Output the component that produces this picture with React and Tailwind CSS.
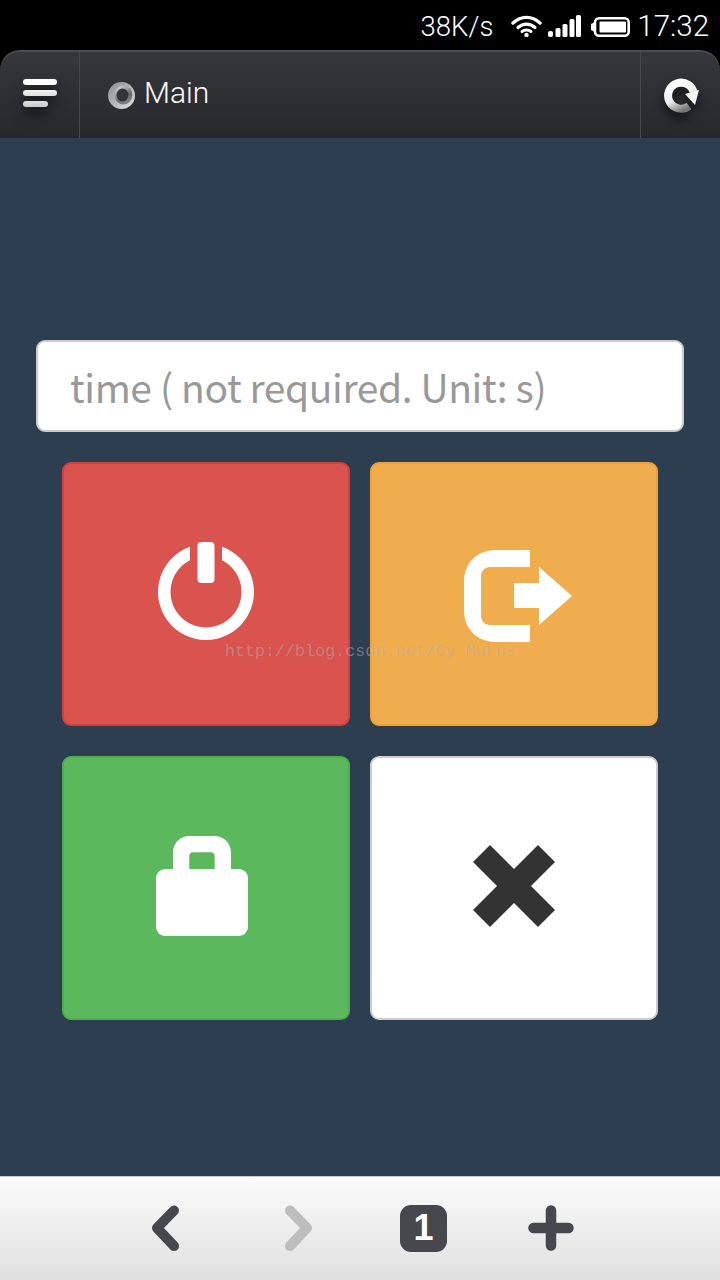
import React from "react";

const StatusBar = () => (
  <div className="h-[50px] bg-black flex items-center justify-end pr-[11px] pt-[3px] text-white font-['Roboto',sans-serif] font-light text-[27.500px]">
    <span className="mr-[18px]">38K/s</span>
    <svg width="70" height="22" viewBox="0 0 70 22" fill="none" className="mr-[10px] mb-[2px]">
      <path d="M2 8 C10 0.500 21 0.500 29 8" stroke="#fff" strokeWidth="3.400" strokeLinecap="round" />
      <path d="M7 12.500 C12 8 19 8 24 12.500" stroke="#fff" strokeWidth="3.200" strokeLinecap="round" />
      <path d="M11 16.500 C13.500 14.500 17.500 14.500 20 16.500" stroke="#fff" strokeWidth="3" strokeLinecap="round" />
      <circle cx="15.500" cy="20" r="2.200" fill="#fff" />
      <rect x="37" y="16" width="5" height="6" rx="2" fill="#fff" />
      <rect x="44.500" y="13" width="5" height="9" rx="1.500" fill="#fff" />
      <rect x="51.500" y="9" width="5" height="13" rx="1.500" fill="#fff" />
      <rect x="58.500" y="4" width="5" height="18" rx="1.500" fill="#fff" />
      <rect x="65" y="0" width="5" height="22" rx="1.500" fill="#fff" />
    </svg>
    <svg width="39" height="20" viewBox="0 0 39 20" fill="none" className="mr-[7px]">
      <path d="M0 7 L4 5 V15 L0 13 Z" fill="#fff" />
      <rect x="4" y="1.300" width="33.700" height="17.400" rx="4" stroke="#fff" strokeWidth="2.600" />
      <rect x="8.500" y="4.500" width="26.500" height="11" rx="1" fill="#fff" />
    </svg>
    <span className="text-[29.500px]">17:32</span>
  </div>
);

const Toolbar = () => (
  <div className="h-[88px] flex rounded-t-[20px] border-t-2 border-[#4b4c50] bg-gradient-to-b from-[#36373b] to-[#27282b]">
    <div className="w-[80px] border-r border-[#47484c] flex items-center justify-center">
      <div className="flex flex-col gap-[5px] w-[34px] mb-[4px] drop-shadow-[0_8px_6px_rgba(0,0,0,0.6)]">
        <div className="h-[6px] w-[34px] rounded-full bg-white" />
        <div className="h-[6px] w-[34px] rounded-full bg-gradient-to-b from-[#f2f2f2] to-[#dddddd]" />
        <div className="h-[6px] w-[25px] rounded-full bg-gradient-to-b from-[#e0e0e0] to-[#c8c8c8]" />
      </div>
    </div>
    <div className="flex-1 flex items-center pl-[28px] pb-[5px]">
      <svg width="27" height="27" viewBox="0 0 27 27" className="mt-[5px]">
        <defs>
          <linearGradient id="globe" x1="0" y1="0" x2="1" y2="1">
            <stop offset="0" stopColor="#8c8c8c" />
            <stop offset="0.5" stopColor="#b4b4b4" />
            <stop offset="1" stopColor="#e6e6e6" />
          </linearGradient>
          <linearGradient id="globeInner" x1="0.2" y1="0" x2="0.8" y2="1">
            <stop offset="0" stopColor="#d8d8d8" />
            <stop offset="0.6" stopColor="#6a6a6a" />
            <stop offset="1" stopColor="#8a8a8a" />
          </linearGradient>
        </defs>
        <circle cx="13.500" cy="13.500" r="13.500" fill="url(#globe)" />
        <ellipse cx="15.500" cy="13" rx="9" ry="9.500" fill="url(#globeInner)" />
        <ellipse cx="14.500" cy="13" rx="6" ry="6.500" fill="#343537" />
      </svg>
      <span className="ml-[9px] text-[30px] font-light leading-none text-white font-['Roboto',sans-serif]">Main</span>
    </div>
    <div className="w-[80px] border-l border-[#47484c] flex items-center justify-center">
      <svg width="36" height="36" viewBox="0 0 36 36" fill="none" className="drop-shadow-[0_6px_5px_rgba(0,0,0,0.6)]">
        <defs>
          <linearGradient id="reload" x1="0.2" y1="0" x2="0.7" y2="1">
            <stop offset="0" stopColor="#ffffff" />
            <stop offset="0.55" stopColor="#eeeeee" />
            <stop offset="1" stopColor="#777777" />
          </linearGradient>
        </defs>
        <path d="M26 29 A13 13 0 1 1 31 17" stroke="url(#reload)" strokeWidth="8" />
        <path d="M22 17 L36 13 L32 28 Z" fill="#f4f4f4" />
      </svg>
    </div>
  </div>
);

const Tile = ({ className, children }) => (
  <button className={`h-[264px] rounded-[9px] border-2 flex items-center justify-center ${className}`}>
    {children}
  </button>
);

const Main = () => (
  <div className="relative h-[1038px] bg-[#2c3e50] px-[36px] pt-[202px]">
    <div className="h-[92px] rounded-[9px] border-2 border-[#cccccc] bg-white flex items-center pl-[32px] text-[39px] tracking-[-0.4px] text-[#999999] font-['Noto_Sans_CJK_SC',sans-serif]">
      time ( not required. Unit: s)
    </div>
    <div className="grid grid-cols-2 gap-x-[20px] gap-y-[30px] px-[26px] mt-[30px]">
      <Tile className="bg-[#d9534f] border-[#d43f3a]">
        <svg width="96" height="98" viewBox="0 0 96 98" className="mt-[-6px]">
          <path d="M32 4.750 A48 48 0 1 0 64 4.750 V18.300 A35.500 35.500 0 1 1 32 18.300 Z" fill="#fff" />
          <rect x="39.500" y="0" width="17" height="41" rx="4" fill="#fff" />
        </svg>
      </Tile>
      <Tile className="bg-[#f0ad4e] border-[#eea236]">
        <svg width="108" height="92" viewBox="0 0 108 92" className="mt-[4px] ml-[8px]">
          <path d="M66 0 H32 C12 0 0 14 0 32 V60 C0 78 12 92 32 92 H66 V75 H26 C21 75 17 71 17 66 V26 C17 21 21 17 26 17 H66 Z" fill="#fff" />
          <path d="M50 33 H75 V17 L108 46 L75 75 V58 H50 Z" fill="#fff" />
        </svg>
      </Tile>
      <Tile className="bg-[#5cb85c] border-[#4cae4c]">
        <svg width="92" height="100" viewBox="0 0 92 100" className="mr-[8px] mt-[-4px]">
          <path d="M17 36 V17 C17 7 24 0 34 0 H58 C68 0 75 7 75 17 V36 H58.700 V20 C58.700 18 57 16.300 55 16.300 H37 C35 16.300 33.300 18 33.300 20 V36 Z" fill="#fff" />
          <rect x="0" y="33" width="92" height="67" rx="9" fill="#fff" />
        </svg>
      </Tile>
      <Tile className="bg-white border-[#cccccc]">
        <svg width="82" height="82" viewBox="0 0 82 82" className="mt-[-4px]">
          <path d="M17 0 L41 24 L65 0 L82 17 L58 41 L82 65 L65 82 L41 58 L17 82 L0 65 L24 41 L0 17 Z" fill="#333333" />
        </svg>
      </Tile>
    </div>
    <div className="absolute left-[225px] top-[503px] text-[16.700px] leading-[22px] text-[#b0b0b0]/50 font-['Liberation_Mono',monospace]">
      http://blog.csdn.net/Cy_Murus
    </div>
  </div>
);

const BottomBar = () => (
  <div className="h-[104px] border-t border-[#c9cbcd] bg-gradient-to-b from-[#fbfbfb] to-[#e0e0e0] flex items-center pl-[150px] pb-[1px]">
    <svg width="32" height="46" viewBox="0 0 32 46" fill="none">
      <path d="M24 5.500 L7 23 L24 41" stroke="#47484d" strokeWidth="10" strokeLinecap="round" strokeLinejoin="round" />
    </svg>
    <svg width="32" height="46" viewBox="0 0 32 46" fill="none" className="ml-[101px]">
      <path d="M7 5.500 L24 23 L7 41" stroke="#bdbdbd" strokeWidth="10" strokeLinecap="round" strokeLinejoin="round" />
    </svg>
    <div className="ml-[85px] w-[47px] h-[47px] rounded-[11px] bg-[#47484d] flex items-center justify-center text-white text-[36px] font-bold font-['Liberation_Sans',sans-serif]">
      1
    </div>
    <svg width="46" height="46" viewBox="0 0 46 46" fill="none" className="ml-[81px]">
      <path d="M23 5.500 V40.500 M5.500 23 H40.500" stroke="#47484d" strokeWidth="10.500" strokeLinecap="round" />
    </svg>
  </div>
);

const App = () => (
  <div className="w-[720px] h-[1280px] overflow-hidden bg-black">
    <StatusBar />
    <Toolbar />
    <Main />
    <BottomBar />
  </div>
);

export default App;
